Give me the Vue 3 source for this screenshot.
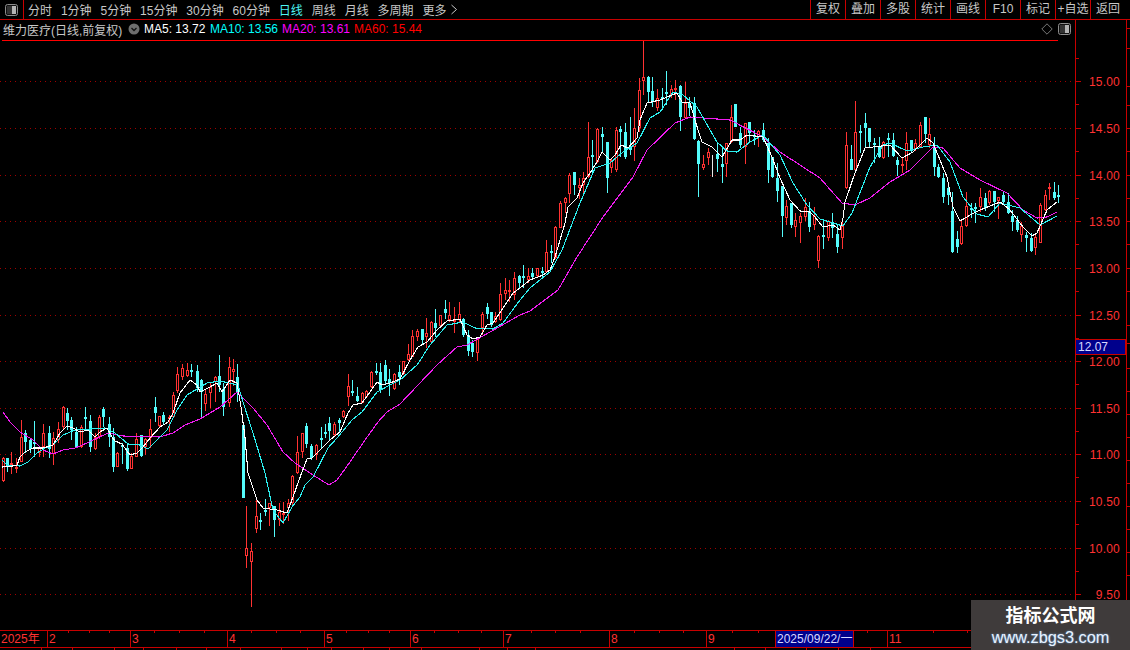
<template>
  <div class="app">
    <header class="toolbar">
      <div class="panel-btn">
        <svg width="13" height="12" viewBox="0 0 13 12"><rect x="0.5" y="0.5" width="12" height="11" rx="2" fill="#111" stroke="#8c8c8c" /><rect x="2" y="2" width="5" height="8" fill="#333" /><rect x="7" y="2" width="4" height="8" fill="#b4b4b4" /></svg>
      </div>
      <nav class="periods">
        <span v-for="p in periods" :key="p" :class="{ on: p === '日线' }">{{ p }}</span>
        <svg class="more" width="8" height="11" viewBox="0 0 8 11"><path d="M1.5 1l5 4.500-5 4.500" fill="none" stroke="#c8c8c8" /></svg>
      </nav>
      <div class="actions">
        <span v-for="a in actions" :key="a">{{ a }}</span>
      </div>
    </header>

    <main class="body">
      <section class="plot">
        <svg class="chart" width="1075" height="610" viewBox="0 20 1075 610">
          <line v-for="g in grid" :key="g" class="grid" x1="0" x2="1075" :y1="g + 0.5" :y2="g + 0.5" />
          <g shape-rendering="crispEdges">
            <template v-for="c in bars" :key="c.x">
              <rect :class="c.kind" class="wick" :x="c.x" :y="c.hi" width="1" :height="c.lo - c.hi" />
              <rect v-if="c.kind === 'up'" class="hollow" :x="c.x - 0.5" :y="c.top + 0.5" width="2" :height="Math.max(c.bot - c.top - 1, 1)" />
              <rect v-else-if="c.kind === 'down'" class="solid" :x="c.x - 1" :y="c.top" width="3" :height="Math.max(c.bot - c.top, 2)" />
            </template>
          </g>
          <polyline class="ma ma20" :points="ma20" />
          <polyline class="ma ma10" :points="ma10" />
          <polyline class="ma ma5" :points="ma5" />
        </svg>
        <div class="legend">
          <span class="name">维力医疗(日线,前复权)</span>
          <svg class="arrow" width="12" height="12" viewBox="0 0 12 12"><circle cx="6" cy="6" r="5.500" fill="#6e6e6e" /><path d="M3.500 5l2.500 2.500L8.500 5" fill="none" stroke="#111" stroke-width="1.300" /></svg>
          <span class="v5">MA5: 13.72</span>
          <span class="v10">MA10: 13.56</span>
          <span class="v20">MA20: 13.61</span>
          <span class="v60">MA60: 15.44</span>
          <svg class="diamond" width="12" height="12" viewBox="0 0 12 12"><path d="M6 .8L11.200 6 6 11.200 .8 6z" fill="none" stroke="#777" /></svg>
          <svg class="toggle" width="13" height="12" viewBox="0 0 13 12"><rect x="0.5" y="0.5" width="12" height="11" rx="2" fill="#111" stroke="#8c8c8c" /><rect x="7" y="2" width="4" height="8" fill="#b4b4b4" /><rect x="2" y="2" width="5" height="8" fill="#333" /></svg>
        </div>
      </section>

      <aside class="axis">
        <svg width="51" height="610" viewBox="1076 20 51 610">
          <g shape-rendering="crispEdges">
            <rect v-for="t in ticks" :key="t.y" class="tick" x="1076" :y="t.y" :width="t.major ? 5 : 3" height="1" />
          </g>
          <text v-for="l in labels" :key="l.y" class="price" x="1120" :y="l.y + 5">{{ l.text }}</text>
        </svg>
        <div class="cursor-price">12.07</div>
      </aside>
      <aside class="edge">
        <svg width="3" height="610" viewBox="0 20 3 610" shape-rendering="crispEdges">
          <rect v-for="y in edgeTicks" :key="y" class="tick" x="0" :y="y" width="3" height="1" />
        </svg>
      </aside>
    </main>

    <footer class="dates">
      <span class="tm" v-for="t in minorDates" :key="t" :style="{ left: t + 'px' }"></span>
      <span v-for="d in dates" :key="d.text" class="date" :class="{ picked: d.picked }" :style="{ width: d.w + 'px' }">{{ d.text }}</span>
    </footer>
    <div class="tabs">
      <span v-for="w in tabs" :key="w" :style="{ width: w + 'px' }"></span>
    </div>

    <div class="stamp">
      <b>指标公式网</b>
      <span>www.zbgs3.com</span>
    </div>
  </div>
</template>

<script setup>
const periods = ['分时', '1分钟', '5分钟', '15分钟', '30分钟', '60分钟', '日线', '周线', '月线', '多周期', '更多']
const actions = ['复权', '叠加', '多股', '统计', '画线', 'F10', '标记', '+自选', '返回']

// price grid, every 0.50 from 15.00 down to 9.50
const grid = [81, 128, 175, 221, 268, 315, 361, 408, 454, 501, 548, 594]
const labels = grid.map((y, i) => ({ y, text: (15 - i * 0.5).toFixed(2) }))
const ticks = []
grid.forEach((y, i) => {
  ticks.push({ y, major: true })
  if (i < grid.length - 1) ticks.push({ y: y + 23, major: false })
})
ticks.push({ y: 58, major: false })
const edgeTicks = [28, 48, 86, 105, 128, 151, 175, 198, 221, 244, 268, 291, 325, 343, 368, 391, 414, 437, 460, 483, 506, 529, 552, 575]

// x, kind (r = hollow red, c = solid cyan), high, body top, body bottom, low
const raw = [
  [3,'r',457,458,481,482],[7,'c',458,458,467,472],[11,'r',452,463,465,474],[16,'r',458,467,468,473],
  [21,'r',420,437,462,462],[25,'c',430,433,442,453],[30,'c',438,440,449,453],[34,'c',421,442,444,457],
  [39,'r',447,447,453,457],[43,'r',424,433,447,457],[49,'c',426,433,449,458],[53,'r',432,438,454,465],
  [58,'r',422,429,440,443],[63,'r',406,407,427,430],[67,'c',408,413,421,430],[71,'c',417,420,430,440],
  [76,'c',427,432,447,448],[81,'r',425,427,447,448],[85,'c',407,417,418,430],[90,'c',415,421,447,452],
  [95,'r',433,437,449,450],[99,'r',415,417,437,439],[103,'c',407,409,417,427],[109,'c',417,424,437,447],
  [113,'c',428,437,467,472],[117,'r',452,453,467,467],[122,'c',443,445,446,464],[127,'c',444,448,469,471],
  [131,'r',453,456,469,469],[136,'r',433,439,457,457],[141,'c',435,435,456,457],[145,'r',438,439,447,455],
  [150,'r',419,429,438,448],[155,'c',397,407,413,422],[159,'r',416,416,426,427],[163,'c',412,415,422,425],
  [169,'r',415,417,418,432],[173,'r',392,395,417,418],[177,'r',367,374,391,393],[182,'r',364,368,377,380],
  [187,'r',363,370,376,377],[191,'c',364,370,372,377],[197,'c',365,371,388,392],[201,'c',379,380,392,417],
  [205,'r',390,394,404,411],[210,'r',383,387,393,408],[215,'r',376,377,382,402],[219,'c',355,376,385,392],
  [223,'c',383,389,407,416],[229,'r',357,367,403,407],[233,'r',359,369,372,386],[237,'c',364,377,393,402],
  [243,'c',425,425,498,498],[246,'r',506,548,556,568],[251,'r',543,551,562,607],[256,'r',500,516,529,533],
  [260,'c',513,520,521,530],[265,'c',499,510,512,516],[269,'r',503,503,508,526],[274,'c',507,506,520,537],
  [279,'r',503,512,520,526],[283,'r',502,513,515,524],[288,'r',499,503,508,521],[292,'r',475,476,503,507],
  [297,'r',436,452,473,474],[302,'r',433,433,452,458],[306,'c',423,426,444,448],[311,'c',444,446,458,460],
  [316,'r',444,445,455,460],[321,'c',427,438,439,448],[325,'c',424,432,432,438],[329,'c',417,423,431,440],
  [334,'r',422,424,435,437],[339,'c',418,420,423,433],[343,'r',410,411,417,418],[348,'r',374,386,397,406],
  [352,'c',380,391,392,396],[357,'c',387,396,401,402],[362,'r',392,393,403,403],[366,'r',390,391,397,398],
  [371,'r',371,372,387,388],[376,'c',363,371,372,375],[380,'c',363,372,390,393],[385,'c',360,365,381,385],
  [389,'c',369,379,383,396],[394,'r',373,374,389,390],[399,'c',365,372,377,385],[403,'r',361,361,374,375],
  [408,'r',344,354,360,361],[412,'r',330,336,357,357],[417,'r',329,331,337,341],[422,'c',329,329,340,345],
  [426,'r',318,333,337,348],[431,'r',321,322,342,343],[435,'c',309,323,328,337],[440,'r',315,315,326,327],
  [445,'c',300,309,313,319],[449,'r',302,315,320,322],[454,'r',307,320,322,333],[459,'r',302,314,320,322],
  [463,'c',318,319,335,337],[468,'c',330,335,351,356],[472,'c',340,343,352,357],[477,'r',337,339,353,361],
  [482,'r',312,314,328,335],[487,'c',303,307,314,319],[491,'c',312,312,325,327],[495,'r',312,316,322,323],
  [500,'r',283,294,320,321],[505,'r',278,290,294,300],[509,'r',280,290,292,302],[514,'r',272,278,295,300],
  [519,'c',275,276,283,288],[523,'c',265,276,277,288],[528,'r',268,276,280,283],[532,'c',268,273,277,280],
  [537,'r',268,268,276,277],[542,'c',267,271,273,278],[546,'r',240,252,272,272],[551,'c',245,251,253,263],
  [555,'r',226,227,258,259],[560,'r',201,203,228,228],[565,'r',197,198,203,213],[569,'r',173,175,194,203],
  [574,'c',172,172,185,195],[579,'r',178,185,188,199],[583,'r',172,178,185,194],[588,'r',122,157,177,178],
  [592,'c',140,155,157,172],[597,'r',128,129,162,163],[602,'c',127,134,137,153],[607,'c',142,142,178,193],
  [611,'r',158,160,168,173],[616,'r',127,130,170,172],[620,'c',126,129,132,157],[625,'c',123,132,157,159],
  [630,'c',117,147,150,155],[634,'r',108,128,147,161],[639,'r',78,90,128,132],[643,'r',40,77,81,95],
  [648,'c',76,77,92,103],[652,'c',77,91,102,107],[657,'r',89,98,108,111],[662,'c',88,97,99,110],
  [666,'c',71,92,93,105],[671,'r',85,89,95,98],[675,'r',80,88,90,100],[680,'c',85,86,117,131],
  [685,'r',82,103,118,119],[689,'c',97,103,108,116],[694,'c',97,103,139,140],[698,'c',140,141,164,197],
  [703,'r',155,164,168,170],[708,'r',148,152,158,165],[712,'w',155,155,155,177],[717,'c',143,154,159,172],
  [722,'c',148,164,167,183],[726,'r',143,143,164,177],[731,'r',105,117,142,143],[735,'c',104,104,127,127],
  [740,'c',127,133,145,148],[745,'r',123,123,147,164],[749,'c',122,122,133,143],[754,'c',130,135,137,145],
  [758,'r',130,131,137,147],[763,'c',123,130,140,142],[768,'c',138,143,170,183],[772,'c',157,157,177,178],
  [777,'c',163,178,191,202],[782,'c',186,186,216,237],[786,'r',200,206,218,225],[791,'c',203,203,225,228],
  [795,'r',213,220,227,237],[800,'r',213,216,223,243],[805,'r',198,207,217,221],[809,'c',202,211,227,232],
  [814,'r',207,216,225,230],[818,'r',235,236,261,268],[823,'c',220,235,237,249],[828,'r',220,221,238,241],
  [832,'c',213,222,228,238],[837,'c',225,234,247,253],[842,'r',221,226,238,249],[846,'r',132,145,188,189],
  [851,'c',145,159,170,170],[855,'r',101,132,170,171],[860,'c',125,131,132,153],[865,'c',113,123,128,147],
  [869,'c',128,128,142,147],[874,'c',138,143,145,163],[879,'c',137,146,157,158],[883,'r',141,142,158,159],
  [888,'c',133,138,140,157],[893,'c',133,140,156,157],[897,'c',157,160,165,176],[902,'r',157,164,165,173],
  [906,'r',132,143,161,170],[911,'c',140,140,151,152],[915,'r',139,143,149,151],[920,'r',122,125,147,148],
  [925,'c',117,117,134,143],[929,'r',118,134,145,148],[934,'c',137,147,167,176],[938,'c',164,167,177,178],
  [943,'c',173,178,197,203],[948,'c',183,188,195,205],[952,'c',192,211,252,253],[957,'c',231,239,247,253],
  [961,'r',220,226,244,245],[966,'r',192,206,226,227],[971,'c',203,208,210,218],[975,'c',203,207,207,223],
  [980,'r',188,197,207,212],[985,'c',193,198,208,211],[989,'r',190,191,203,205],[994,'c',191,191,202,212],
  [998,'r',197,197,201,219],[1003,'c',192,195,202,203],[1008,'c',193,202,213,214],[1012,'c',210,216,222,231],
  [1017,'c',216,220,230,232],[1021,'r',222,226,235,242],[1026,'c',232,235,238,252],[1031,'c',233,238,251,252],
  [1035,'r',234,237,248,255],[1040,'r',203,205,243,243],[1045,'r',190,195,210,211],[1049,'r',183,187,189,200],
  [1054,'c',182,192,198,200],[1058,'c',185,195,196,203]
]
const kinds = { r: 'up', c: 'down', w: 'flat' }
const bars = raw.map(([x, k, hi, top, bot, lo]) => ({ x, kind: kinds[k], hi, top, bot, lo }))

const ma5 = '2,467 13,466 17,465 20,457 25,452 33,448 43,448 53,445 60,433 67,426 73,428 80,432 88,430 95,437 100,432 107,428 112,437 115,441 122,444 130,455 137,453 143,447 150,438 160,427 168,422 173,413 180,393 190,380 197,385 200,392 210,387 217,383 222,392 230,380 237,383 241,407 245,437 248,473 257,500 263,508 277,510 287,513 293,497 299,480 307,459 312,458 330,440 340,432 348,413 353,405 362,403 370,392 377,382 382,385 390,383 400,379 410,360 418,347 427,342 437,330 447,321 460,319 467,335 473,339 480,337 487,325 493,323 503,308 513,293 520,288 530,280 543,275 550,270 555,257 565,223 568,207 577,198 583,183 590,173 597,162 602,152 610,160 615,155 621,145 628,148 637,138 640,120 647,103 660,100 672,95 677,93 682,102 690,103 698,130 702,142 712,147 722,157 732,140 740,140 747,135 763,137 772,157 780,178 790,200 800,211 810,212 815,217 823,227 833,225 840,230 843,218 845,202 855,173 865,148 873,147 890,145 902,158 913,152 927,138 933,143 947,177 953,207 960,221 972,214 980,210 1000,202 1010,210 1023,227 1032,236 1037,233 1047,210 1057,202'
const ma10 = '2,460 7,465 20,466 28,462 37,453 45,448 53,445 63,435 75,430 90,429 105,428 115,433 128,444 140,445 148,449 157,440 167,430 177,410 187,395 197,389 207,383 220,381 238,385 243,402 253,433 265,473 273,510 283,523 292,507 300,497 305,485 313,477 328,448 337,438 352,420 362,412 377,392 388,386 400,380 417,365 430,345 447,325 463,322 475,328 493,329 503,323 520,300 530,288 550,272 562,250 580,203 595,168 610,163 623,152 637,143 650,118 660,112 673,92 683,95 697,107 717,142 727,151 737,152 750,142 763,135 780,155 793,183 807,205 820,219 843,226 852,213 870,167 883,145 890,143 907,151 923,147 937,145 950,162 963,197 977,214 988,217 1000,203 1020,208 1040,225 1057,216'
const ma20 = '3,412 10,422 20,432 33,440 43,450 53,454 63,450 75,448 87,443 108,433 123,436 160,437 173,433 185,425 200,419 220,407 237,392 253,408 267,425 283,452 295,463 313,475 329,485 337,480 350,462 365,440 378,422 387,412 400,404 437,365 457,347 467,345 490,332 520,315 530,311 550,296 558,290 577,257 603,217 633,177 647,150 675,123 690,117 730,120 763,137 780,152 803,167 820,178 842,203 855,205 870,198 890,182 910,170 933,147 943,148 960,168 980,180 1007,193 1023,210 1037,218 1047,217 1057,212'

const dates = [
  { text: '2025年', w: 48 }, { text: '2', w: 83 }, { text: '3', w: 97 }, { text: '4', w: 97 },
  { text: '5', w: 86 }, { text: '6', w: 93 }, { text: '7', w: 106 }, { text: '8', w: 97 },
  { text: '9', w: 69 }, { text: '2025/09/22/一', w: 78, picked: true }, { text: '', w: 34 }, { text: '11', w: 242 }
]
const minorDates = [68, 89, 109, 154, 179, 204, 251, 276, 300, 346, 368, 389, 434, 458, 481, 531, 555, 580, 634, 659, 683, 732, 758, 867, 933, 967]
const tabs = [42, 31, 42, 29, 33, 30, 34, 41, 26, 24, 32, 26, 32, 58, 28, 28, 199, 31, 41, 32, 32, 259]
</script>

<style>
html, body {
  background: #000;
  overflow: hidden;
}
</style>

<style scoped>
.app {
  position: relative;
  display: flex;
  flex-direction: column;
  width: 1130px;
  height: 650px;
  overflow: hidden;
  background: #000;
  color: #c8c8c8;
  font: 12px "Liberation Sans", "Noto Sans CJK SC", sans-serif;
}

.toolbar {
  display: flex;
  flex: none;
  height: 19px;
  border-bottom: 1px solid #c80000;
}
.panel-btn {
  display: flex;
  align-items: center;
  justify-content: center;
  width: 23px;
  border-right: 1px solid #c80000;
}
.periods {
  display: flex;
  align-items: center;
  gap: 8.900px;
  padding-left: 4px;
}
.periods .on { color: #4df4f4; }
.more { margin-left: -5px; }
.actions {
  display: flex;
  margin-left: auto;
  width: 320px;
}
.actions span {
  flex: none;
  width: 35px;
  border-left: 1px solid #c80000;
  box-sizing: border-box;
  line-height: 19px;
  text-align: center;
}

.body {
  display: flex;
  flex: none;
  height: 610px;
}
.plot {
  position: relative;
  width: 1075px;
  border-right: 1px solid #c80000;
}
.chart {
  position: absolute;
  left: 0;
  top: 0;
}
.grid {
  stroke: #a00000;
  stroke-dasharray: 1 4;
}
.wick.up { fill: #ff3232; }
.wick.down { fill: #54fcfc; }
.wick.flat { fill: #e8e8e8; }
.hollow {
  fill: #000;
  stroke: #ff3232;
}
.solid { fill: #54fcfc; }
.ma {
  fill: none;
  stroke-linejoin: round;
  shape-rendering: crispEdges;
  stroke-width: 1.100;
}
.ma5 { stroke: #fff; }
.ma10 { stroke: #2cf0f0; }
.ma20 { stroke: #f01cf0; }

.legend {
  position: absolute;
  left: 2px;
  top: 0;
  display: flex;
  align-items: center;
  width: 1056px;
  height: 21px;
  border-bottom: 1px solid #f00;
  padding: 0 0 2px 1px;
  box-sizing: border-box;
}
.name { width: 125px; white-space: nowrap; }
.arrow { margin-right: 4px; }
.v5 { width: 66px; color: #fff; }
.v10 { width: 72px; color: #0ff; }
.v20 { width: 72px; color: #f0f; }
.v60 { color: #f00; }
.diamond {
  position: absolute;
  left: 1039px;
  top: 3px;
}
.toggle {
  position: absolute;
  left: 1056px;
  top: 3px;
}

.axis {
  position: relative;
  width: 50px;
  border-right: 1px solid #c80000;
}
.tick { fill: #c80000; }
.price {
  fill: #ff3232;
  font-size: 12px;
  text-anchor: end;
  letter-spacing: 0.2px;
}
.cursor-price {
  position: absolute;
  left: -1px;
  top: 319px;
  width: 51px;
  height: 16px;
  box-sizing: border-box;
  border: 1px solid #c80000;
  background: #00008c;
  color: #d8d8ff;
  line-height: 14px;
  padding-left: 2px;
}
.edge { width: 3px; }

.dates {
  position: relative;
  display: flex;
  flex: none;
  height: 16px;
  border-top: 1px solid #c80000;
  border-bottom: 1px solid #c80000;
  color: #ff3232;
  box-sizing: content-box;
}
.date {
  flex: none;
  box-sizing: border-box;
  border-right: 1px solid #c80000;
  line-height: 16px;
  padding-left: 1px;
  white-space: nowrap;
}
.date:first-of-type { padding-left: 2px; }
.date.picked {
  background: #00008c;
  color: #d8d8ff;
}
.tm {
  position: absolute;
  top: 0;
  width: 1px;
  height: 2px;
  background: #c80000;
}
.tabs {
  display: flex;
  flex: none;
  height: 3px;
}
.tabs span {
  flex: none;
  box-sizing: border-box;
  border-right: 1px solid #c80000;
}

.stamp {
  position: absolute;
  right: 0;
  bottom: 0;
  display: flex;
  flex-direction: column;
  align-items: center;
  width: 159px;
  height: 50px;
  padding-top: 4px;
  box-sizing: border-box;
  background: #3f3b3b;
  color: #fff;
}
.stamp b {
  font-size: 18px;
  line-height: 24px;
}
.stamp span {
  font-size: 16.300px;
  line-height: 18px;
  color: #e8f2ff;
  text-shadow: 0 0 2px #6fa8e0;
}
</style>
